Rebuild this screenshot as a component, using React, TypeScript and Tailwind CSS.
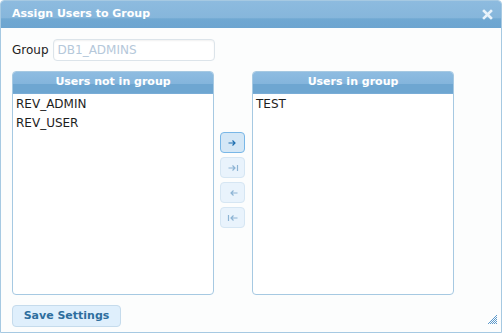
import React from 'react';

const font = { fontFamily: '"DejaVu Sans", Verdana, sans-serif' };

const ArrowIcon: React.FC<{ kind: 'right' | 'rightEnd' | 'left' | 'leftEnd' }> = ({ kind }) => {
  const flip = kind === 'left' || kind === 'leftEnd';
  const bar = kind === 'rightEnd' || kind === 'leftEnd';
  return (
    <svg width="12" height="8" viewBox="0 0 12 8" style={flip ? { transform: 'scaleX(-1)' } : undefined}>
      <path d="M1.5 4 H8 M5.5 1.5 L8 4 L5.5 6.5" stroke="currentColor" strokeWidth="1.2" fill="none" />
      {bar && <path d="M10.5 1 V7" stroke="currentColor" strokeWidth="1.2" />}
    </svg>
  );
};

const ListPanel: React.FC<{ title: string; items: string[] }> = ({ title, items }) => (
  <div className="w-[202px] h-[224px] flex flex-col border border-[#a6c9e2] rounded-[4px] bg-white overflow-hidden">
    <div className="h-[22px] shrink-0 flex items-center justify-center text-white font-bold text-[11px] border-b border-[#79acd6] bg-[linear-gradient(to_bottom,#8ebce1_0%,#84b5dc_55%,#6ea6d1_58%,#6ea6d1_100%)]">
      {title}
    </div>
    <div className="pt-[1px] pl-[3px]">
      {items.map((it) => (
        <div key={it} className="h-[19px] leading-[19px] text-[12px] text-[#1d1d1d]">{it}</div>
      ))}
    </div>
  </div>
);

export default function App() {
  return (
    <div style={font} className="w-[502px] h-[333px] flex flex-col border border-[#a6c9e2] rounded-t-[4px] bg-[#fcfdfd] overflow-hidden">
      <div className="h-[27px] shrink-0 flex items-center justify-between pl-[11px] pr-[8px] bg-[linear-gradient(to_bottom,#8dbbdf_0%,#86b6db_62%,#70a8d2_66%,#6da5d0_100%)]">
        <span className="text-white font-bold text-[11px]">Assign Users to Group</span>
        <svg width="11" height="11" viewBox="0 0 11 11">
          <path d="M2 2 L9 9 M9 2 L2 9" stroke="#e8f2fa" strokeWidth="2.6" strokeLinecap="square" />
        </svg>
      </div>

      <div className="flex-1 flex flex-col pl-[11px] pt-[11px]">
        <div className="flex items-center gap-[4px] h-[22px]">
          <span className="text-[12px] text-[#222]">Group</span>
          <div className="w-[162px] h-[22px] flex items-center pl-[4px] border border-[#dce4ea] rounded-[4px] bg-white shadow-[inset_0_1px_2px_rgba(0,0,0,0.06)] text-[12px] text-[#b5c8da]">
            DB1_ADMINS
          </div>
        </div>

        <div className="flex mt-[10px]">
          <ListPanel title="Users not in group" items={['REV_ADMIN', 'REV_USER']} />
          <div className="w-[38px] flex flex-col gap-[4px] pl-[6px] pt-[61px]">
            <button className="w-[25px] h-[21px] flex items-center justify-center rounded-[4px] border border-[#79b7e7] bg-[#d4e7f6] text-[#1e6fb0]">
              <ArrowIcon kind="right" />
            </button>
            <button className="w-[25px] h-[21px] flex items-center justify-center rounded-[4px] border border-[#d6e6f3] bg-[#e9f3fc] text-[#8db4d4]">
              <ArrowIcon kind="rightEnd" />
            </button>
            <button className="w-[25px] h-[21px] flex items-center justify-center rounded-[4px] border border-[#d6e6f3] bg-[#e9f3fc] text-[#8db4d4]">
              <ArrowIcon kind="left" />
            </button>
            <button className="w-[25px] h-[21px] flex items-center justify-center rounded-[4px] border border-[#d6e6f3] bg-[#e9f3fc] text-[#8db4d4]">
              <ArrowIcon kind="leftEnd" />
            </button>
          </div>
          <ListPanel title="Users in group" items={['TEST']} />
        </div>

        <div className="flex items-end justify-between mt-[10px] pr-[4px]">
          <button className="w-[109px] h-[22px] rounded-[4px] border border-[#c5dbec] bg-[#dfeffc] text-[#2e6e9e] font-bold text-[11px]">
            Save Settings
          </button>
          <svg width="10" height="10" viewBox="0 0 10 10" className="mb-[3px]">
            {[[9, 1], [8, 2], [9, 3], [7, 3], [6, 4], [8, 4], [9, 5], [5, 5], [7, 5], [4, 6], [6, 6], [8, 6], [9, 7], [3, 7], [5, 7], [7, 7], [2, 8], [4, 8], [6, 8], [8, 8], [1, 9], [3, 9], [5, 9], [7, 9], [9, 9]].map(([x, y], i) => (
              <rect key={i} x={x} y={y} width="1" height="1" fill="#5d9acc" />
            ))}
          </svg>
        </div>
      </div>
    </div>
  );
}
